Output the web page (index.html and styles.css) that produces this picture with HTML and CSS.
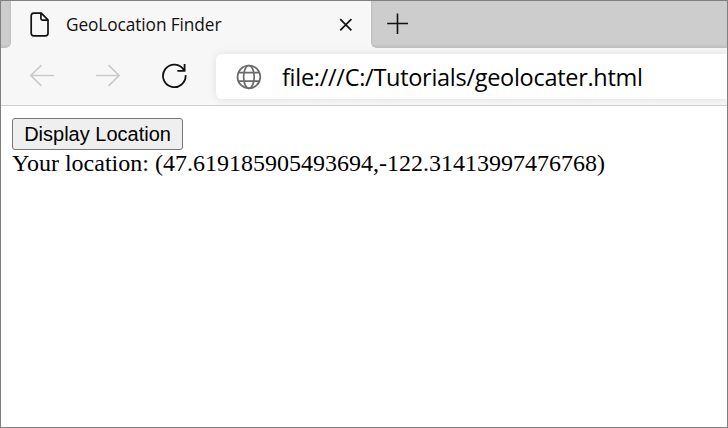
FILE: index.html
```html
<!DOCTYPE html>
<html lang="en">
<head>
<meta charset="utf-8">
<title>GeoLocation Finder</title>
<link rel="stylesheet" href="styles.css">
</head>
<body>
<div class="window">
  <header class="tabstrip">
    <div class="strip-start"></div>
    <div class="tab">
      <svg class="page-icon" width="20" height="26" viewBox="0 0 20 26"><path d="M3.7 1.2H11.3L18 7.9V21.3Q18 23.8 15.5 23.8H3.7Q1.2 23.8 1.2 21.3V3.7Q1.2 1.2 3.7 1.2ZM10.9 1.5V6.6Q10.9 8.2 12.5 8.2H17.7"/></svg>
      <span class="tab-title">GeoLocation Finder</span>
      <svg class="close-icon" width="14" height="14" viewBox="0 0 14 14"><path d="M1.2 1.2L12.4 12.4M12.4 1.2L1.2 12.4"/></svg>
    </div>
    <div class="strip-rest">
      <svg class="plus-icon" width="22" height="22" viewBox="0 0 22 22"><path d="M10.5 0.5V21M0.2 10.5H21"/></svg>
    </div>
  </header>
  <nav class="toolbar">
    <svg class="nav-icon off" width="26" height="24" viewBox="0 0 26 24"><path d="M25 11.5H1.5M12.5 1.2L1.8 11.5L12.5 21.8"/></svg>
    <svg class="nav-icon forward off" width="26" height="24" viewBox="0 0 26 24"><path d="M1 11.5H24.5M13.5 1.2L24.2 11.5L13.5 21.8"/></svg>
    <svg class="nav-icon reload" width="26" height="26" viewBox="0 0 26 26"><path d="M23.6 12.1A11.3 11.3 0 1 1 22 7M22.6 1V7.8H15.4"/></svg>
    <div class="address">
      <svg class="globe-icon" width="26" height="26" viewBox="0 0 26 26"><circle cx="12.9" cy="12.9" r="11.4"/><ellipse cx="12.9" cy="12.9" rx="5.3" ry="11.4"/><path d="M2.4 8.6H23.4M2.4 17.2H23.4"/></svg>
      <span class="url">file:///C:/Tutorials/geolocater.html</span>
    </div>
  </nav>
  <main class="page">
    <button class="locate" type="button">Display Location</button>
    <p class="result">Your location: (47.619185905493694,-122.31413997476768)</p>
  </main>
</div>
</body>
</html>
```
FILE: styles.css
```css
* { box-sizing: border-box; }
body { margin: 0; background: #fff; }
svg { flex: none; fill: none; stroke: #111; display: block; }
.window {
  width: 728px;
  height: 428px;
  border: 1px solid #808080;
  display: flex;
  flex-direction: column;
  overflow: hidden;
}
.tabstrip { display: flex; height: 47px; background: #f7f7f7; }
.strip-start, .strip-rest {
  background: linear-gradient(#cdcdcd 43px, #bebebe 47px);
}
.strip-start { width: 10px; border-bottom-right-radius: 6px; box-shadow: inset -2px 0 2px -1px #bebebe; }
.strip-rest { flex: 1; border-bottom-left-radius: 6px; padding: 12px 0 0 16px; box-shadow: inset 2px 0 2px -1px #bebebe; }
.tab { width: 360px; display: flex; align-items: center; padding-left: 18px; background: #f7f7f7; }
.page-icon { stroke-width: 1.7; margin-left: 0.5px; stroke-linejoin: round; }
.tab-title {
  width: 259px;
  margin: 0 14px 0 16.5px;
  font: 17.3px/24px "Open Sans", "Noto Sans", sans-serif;
  letter-spacing: -0.1px;
  color: #111;
  white-space: nowrap;
}
.close-icon { stroke-width: 1.7; }
.plus-icon { stroke-width: 1.6; }
.toolbar {
  height: 58px;
  background: #f7f7f7;
  border-bottom: 1px solid #cecece;
  display: flex;
  align-items: center;
  padding-left: 28px;
}
.nav-icon { stroke-width: 1.6; margin-bottom: 2px; }
.off { stroke: #cacaca; }
.forward { margin-left: 40px; }
.reload { margin-left: 41px; stroke-width: 1.8; }
.address {
  flex: 1;
  height: 45px;
  margin-left: 28px;
  background: #fff;
  border-radius: 6px 0 0 6px;
  box-shadow: 0 0 8px rgba(0, 0, 0, .1);
  display: flex;
  align-items: center;
  padding-left: 20px;
}
.globe-icon { stroke: #6b6b6b; stroke-width: 1.7; }
.url {
  margin-left: 20px;
  font: 23.5px/32px "Open Sans", "Noto Sans", sans-serif;
  letter-spacing: -0.29px;
  color: #000;
  white-space: nowrap;
}
.page { padding: 12px 11px; }
.locate {
  display: block;
  width: 171px;
  height: 32px;
  padding: 0;
  border: 1px solid #767676;
  border-radius: 3px;
  background: #efefef;
  color: #000;
  font: 20px/24px "Liberation Sans", Arial, sans-serif;
  white-space: nowrap;
}
.result {
  margin: 0;
  font: 24px/27px "Liberation Serif", "Times New Roman", serif;
  color: #000;
  white-space: nowrap;
}
```
